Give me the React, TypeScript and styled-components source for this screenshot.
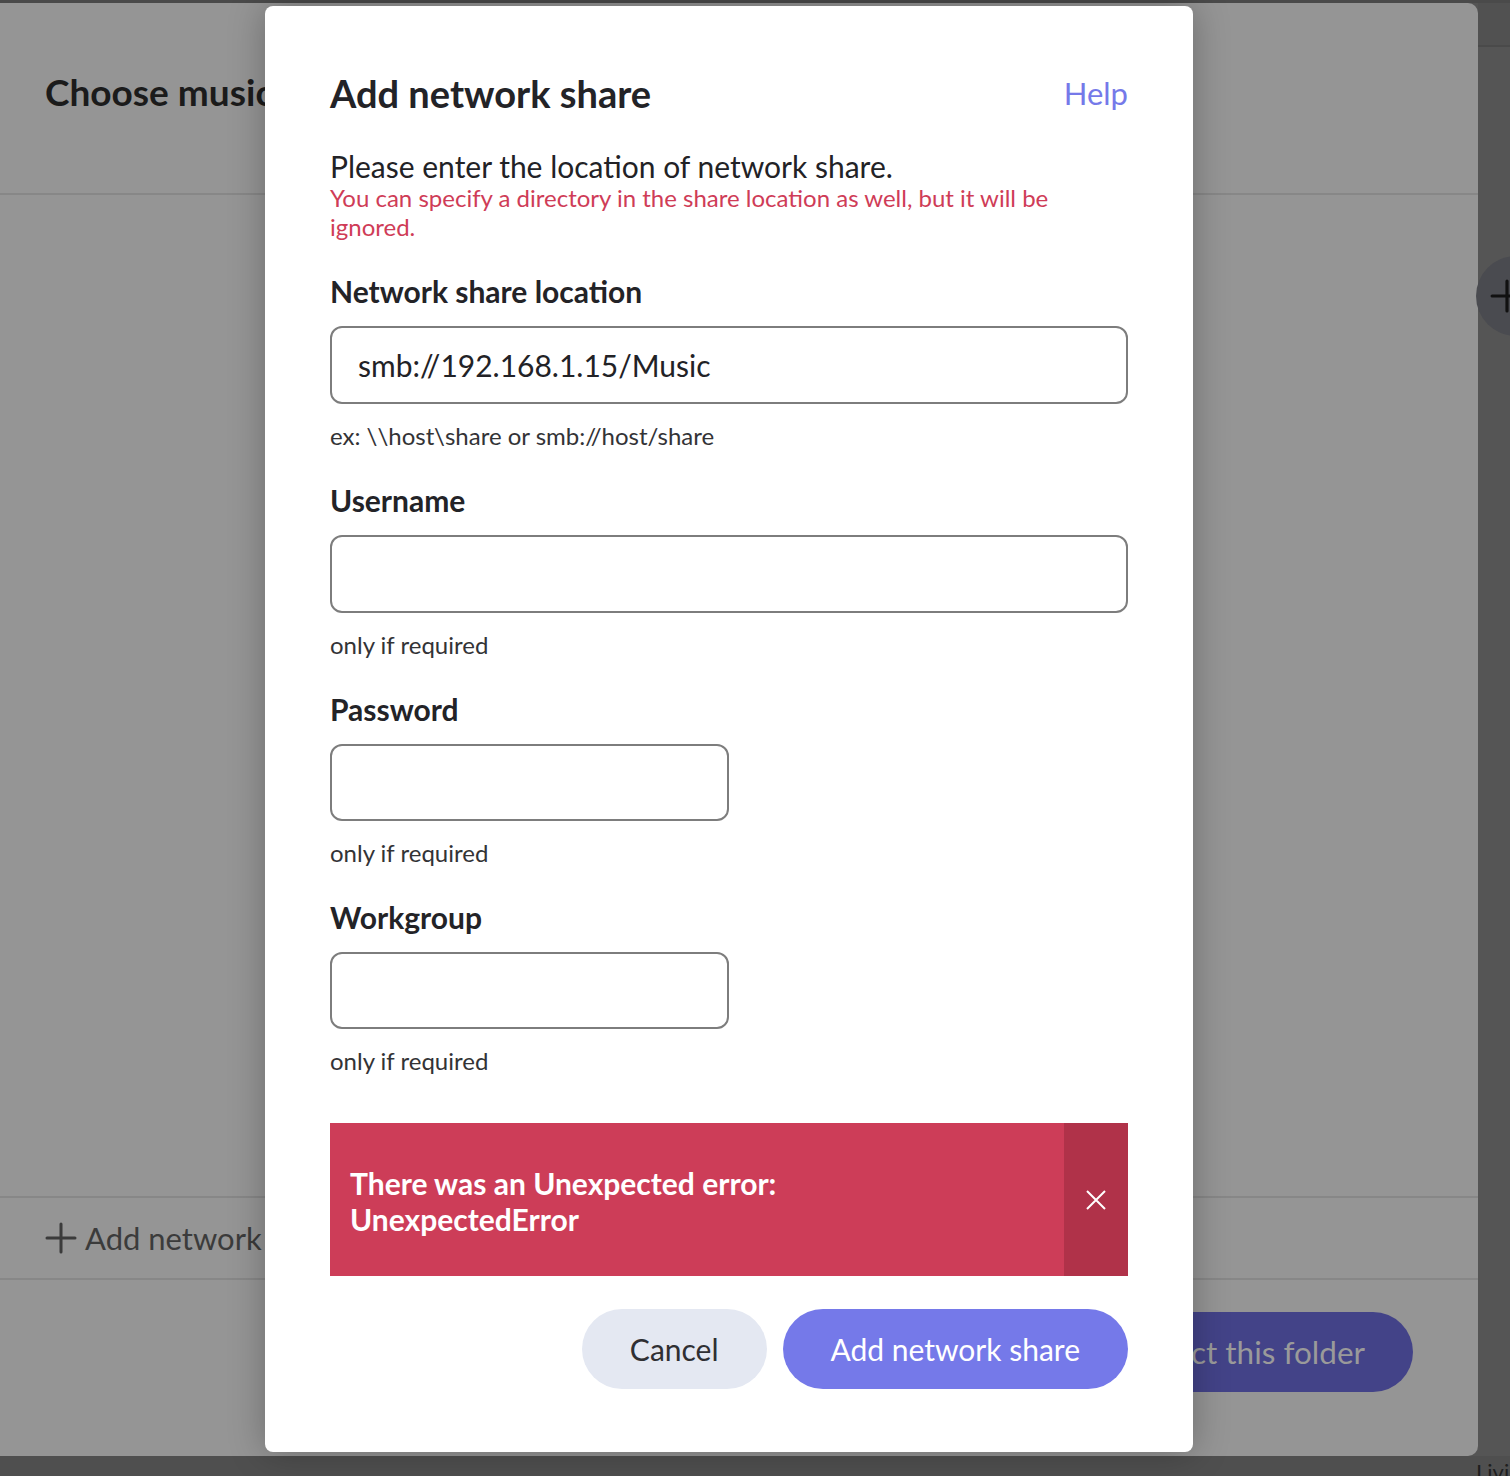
import React from "react";
import styled, {createGlobalStyle} from "styled-components";

const GlobalStyle = createGlobalStyle`
    html, body {
        margin: 0;
        padding: 0;
    }
    body {
        background: #555555;
        font-family: Lato, "Open Sans", "Liberation Sans", sans-serif;
    }
    * {
        box-sizing: border-box;
    }
`;

const Page = styled.div`
    position: relative;
    width: 1510px;
    height: 1476px;
    overflow: hidden;
    display: flex;
    flex-direction: column;
    background: #555555;
`;

const TopBar = styled.div`
    height: 3px;
    background: #4a4a4a;
`;

const Middle = styled.div`
    display: flex;
    height: 1453px;
`;

const BottomBar = styled.div`
    flex: 1;
    background: #4f4f4f;
    display: flex;
    justify-content: flex-end;
    align-items: flex-end;
    overflow: hidden;
`;

const BottomText = styled.span`
    font-size: 22px;
    line-height: 20px;
    height: 20px;
    color: #1e1e1e;
    width: 34px;
    padding-top: 6px;
    overflow: hidden;
    white-space: nowrap;
`;

/* dimmed dialog in the background */
const BackDialog = styled.div`
    width: 1498px;
    margin-left: -20px;
    flex-shrink: 0;
    background: #959595;
    border-radius: 0 10px 10px 0;
    display: flex;
    flex-direction: column;
`;

const BackHeader = styled.div`
    height: 192px;
    padding: 67px 0 0 65px;
    border-bottom: 2px solid #878787;
`;

const BackTitle = styled.div`
    font-size: 37px;
    line-height: 44px;
    font-weight: 700;
    color: #1b1b1b;
`;

const BackBody = styled.div`
    flex: 1;
`;

const BackRow = styled.div`
    height: 84px;
    border-top: 2px solid #878787;
    border-bottom: 2px solid #878787;
    display: flex;
    align-items: center;
    gap: 8px;
    padding-left: 65px;
    font-size: 31px;
    color: #3b3b3b;
`;

const BackFooter = styled.div`
    height: 176px;
    padding: 32px 65px 0 0;
    display: flex;
    justify-content: flex-end;
    align-items: flex-start;
`;

const BackButton = styled.div`
    height: 80px;
    border-radius: 40px;
    background: #434388;
    color: #9a9a9a;
    font-size: 31.5px;
    display: flex;
    align-items: center;
    padding: 0 48px;
`;

const SideStrip = styled.div`
    flex: 1;
    display: flex;
    flex-direction: column;
    min-width: 0;
`;

const SideTop = styled.div`
    height: 44px;
    background: #515151;
    border-bottom: 2px solid #4a4a4a;
`;

const SideCircle = styled.div`
    margin-top: 209px;
    margin-left: -2px;
    width: 80px;
    height: 80px;
    border-radius: 50%;
    background: #4a4b50;
    display: flex;
    align-items: center;
    padding-left: 14px;
`;

/* modal */
const Modal = styled.div`
    position: absolute;
    left: 265px;
    top: 6px;
    width: 928px;
    background: #ffffff;
    border-radius: 8px;
    box-shadow: 0 0 36px rgba(0, 0, 0, 0.28);
    padding: 65px 65px 63px 65px;
    display: flex;
    flex-direction: column;
    color: #222226;
`;

const Header = styled.div`
    display: flex;
    justify-content: space-between;
    align-items: center;
`;

const Title = styled.h2`
    margin: 0;
    font-size: 38px;
    line-height: 44px;
    font-weight: 700;
    color: #232327;
`;

const HelpLink = styled.a`
    font-size: 31px;
    line-height: 44px;
    color: #7579e9;
    cursor: pointer;
`;

const Intro = styled.p`
    margin: 34px 0 0;
    font-size: 30px;
    line-height: 34px;
`;

const Warning = styled.p`
    margin: 0;
    font-size: 24px;
    line-height: 29px;
    color: #cf3c57;
`;

const Field = styled.div`
    margin-top: 33px;
    display: flex;
    flex-direction: column;
    align-items: flex-start;
`;

const Label = styled.label`
    font-size: 30px;
    line-height: 34px;
    font-weight: 700;
    color: #232327;
`;

const TextInput = styled.input<{ $narrow?: boolean }>`
    margin-top: 18px;
    width: ${p => (p.$narrow ? "399px" : "100%")};
    height: ${p => (p.$narrow ? "77px" : "78px")};
    border: 2px solid #7d7d7d;
    border-radius: 12px;
    padding: 0 26px;
    font-family: inherit;
    font-size: 30px;
    color: #222226;
    background: #ffffff;
    outline: none;
`;

const Hint = styled.div`
    margin-top: 18px;
    font-size: 24px;
    line-height: 28px;
    color: #333336;
`;

const ErrorBox = styled.div`
    margin-top: 48px;
    height: 153px;
    display: flex;
    background: #cd3d58;
`;

const ErrorText = styled.div`
    flex: 1;
    align-self: center;
    padding: 2px 20px 0;
    font-size: 30px;
    line-height: 36px;
    font-weight: 700;
    color: #ffffff;
`;

const CloseArea = styled.button`
    width: 64px;
    border: none;
    padding: 0;
    background: #b03249;
    display: flex;
    align-items: center;
    justify-content: center;
    cursor: pointer;
`;

const Actions = styled.div`
    margin-top: 33px;
    display: flex;
    justify-content: flex-end;
    gap: 16px;
`;

const Button = styled.button<{ $primary?: boolean }>`
    height: 80px;
    border: none;
    border-radius: 40px;
    padding: 0 48px;
    font-family: inherit;
    font-size: 30px;
    background: ${p => (p.$primary ? "#7579e9" : "#e4e8f2")};
    color: ${p => (p.$primary ? "#ffffff" : "#2f2f33")};
    cursor: pointer;
`;

const PlusIcon = ({size, color, weight}: { size: number; color: string; weight: number }) => (
    <svg width={size} height={size} viewBox="0 0 32 32">
        <path d="M16 2v28M2 16h28" stroke={color} strokeWidth={weight} strokeLinecap="round"/>
    </svg>
);

const fields = [
    {label: "Network share location", value: "smb://192.168.1.15/Music", hint: "ex: \\\\host\\share or smb://host/share", narrow: false},
    {label: "Username", value: "", hint: "only if required", narrow: false},
    {label: "Password", value: "", hint: "only if required", narrow: true},
    {label: "Workgroup", value: "", hint: "only if required", narrow: true},
];

const App = () => {
    return (
        <Page>
            <GlobalStyle/>
            <TopBar/>
            <Middle>
                <BackDialog>
                    <BackHeader>
                        <BackTitle>Choose music folder</BackTitle>
                    </BackHeader>
                    <BackBody/>
                    <BackRow>
                        <PlusIcon size={32} color="#3b3b3b" weight={3}/>
                        Add network share
                    </BackRow>
                    <BackFooter>
                        <BackButton>Select this folder</BackButton>
                    </BackFooter>
                </BackDialog>
                <SideStrip>
                    <SideTop/>
                    <SideCircle>
                        <PlusIcon size={34} color="#111111" weight={3}/>
                    </SideCircle>
                </SideStrip>
            </Middle>
            <BottomBar>
                <BottomText>Living</BottomText>
            </BottomBar>

            <Modal>
                <Header>
                    <Title>Add network share</Title>
                    <HelpLink>Help</HelpLink>
                </Header>
                <Intro>Please enter the location of network share.</Intro>
                <Warning>
                    You can specify a directory in the share location as well, but it will be ignored.
                </Warning>

                {fields.map(f => (
                    <Field key={f.label}>
                        <Label>{f.label}</Label>
                        <TextInput
                            $narrow={f.narrow}
                            type={f.label === "Password" ? "password" : "text"}
                            defaultValue={f.value}
                        />
                        <Hint>{f.hint}</Hint>
                    </Field>
                ))}

                <ErrorBox>
                    <ErrorText>
                        There was an Unexpected error:<br/>UnexpectedError
                    </ErrorText>
                    <CloseArea aria-label="close">
                        <svg width="22" height="22" viewBox="0 0 22 22">
                            <path d="M2 2L20 20M20 2L2 20" stroke="#ffffff" strokeWidth="2"/>
                        </svg>
                    </CloseArea>
                </ErrorBox>

                <Actions>
                    <Button>Cancel</Button>
                    <Button $primary>Add network share</Button>
                </Actions>
            </Modal>
        </Page>
    );
};

export default App;
